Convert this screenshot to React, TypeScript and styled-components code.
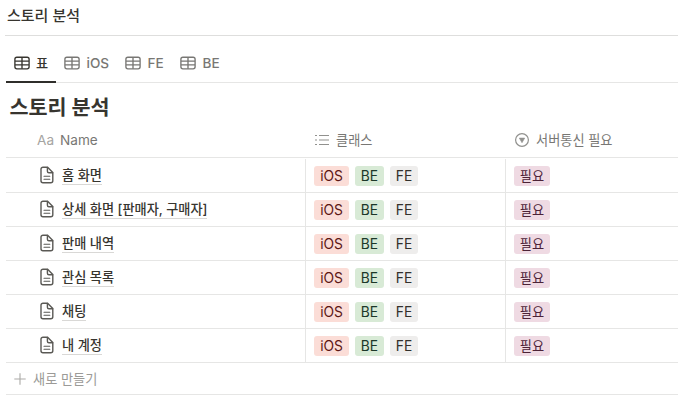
import React from 'react';
import styled, { createGlobalStyle } from 'styled-components';

const GlobalStyle = createGlobalStyle`
  * { box-sizing: border-box; }
  body {
    margin: 0;
    background: #fff;
    color: #37352f;
    font-family: Inter, "Noto Sans CJK KR", sans-serif;
    font-size: 13.2px;
  }
`;

const LINE = '#e6e6e5';

const Page = styled.div`
  width: 692px;
  height: 414px;
  padding: 0 14px 0 6px;
  overflow: hidden;
  white-space: nowrap;
`;

const PageTitle = styled.header`
  height: 36px;
  margin-left: -1px;
  padding-left: 2px;
  border-bottom: 1px solid #dededd;
  font-size: 15px;
  font-weight: 500;
  line-height: 31px;
`;

const Tabs = styled.nav`
  display: flex;
  height: 47px;
  padding-top: 11px;
  border-bottom: 1px solid ${LINE};
`;

const Tab = styled.button<{ $active?: boolean; $width: number }>`
  display: flex;
  align-items: center;
  gap: ${(p) => (p.$active ? 6 : 6.5)}px;
  width: ${(p) => p.$width}px;
  height: 36px;
  padding: 0 0 3px 8px;
  border: 0;
  border-bottom: 2px solid ${(p) => (p.$active ? '#2f2e2b' : 'transparent')};
  background: none;
  color: ${(p) => (p.$active ? '#37352f' : '#787774')};
  font: inherit;
  font-size: ${(p) => (p.$active ? 13.2 : 13.6)}px;
  font-weight: 500;
`;

const Heading = styled.h1`
  height: 40px;
  margin: 0;
  padding-left: 3.5px;
  font-size: 20.7px;
  font-weight: 700;
  line-height: 49px;
`;

const Row = styled.div`
  display: grid;
  grid-template-columns: 299px 200px 173px;
  height: 34px;
  border-bottom: 1px solid ${LINE};
`;

const HeaderRow = styled(Row)`
  height: 35px;
  color: #787774;
`;

const HeaderCell = styled.div<{ $left?: number }>`
  display: flex;
  align-items: center;
  gap: 6px;
  padding: 0 0 1px ${(p) => p.$left ?? 8}px;

  svg { flex: none; color: #91918e; }
`;

const Latin = styled.span<{ $muted?: boolean }>`
  color: ${(p) => (p.$muted ? '#a5a4a1' : 'inherit')};
  font-size: 13.6px;
`;

const Body = styled.div`
  padding-top: 1px;
`;

const NameCell = styled.div`
  display: flex;
  align-items: center;
  gap: 7px;
  padding-left: 33px;

  svg {
    flex: none;
    margin-bottom: 1px;
  }
`;

const PageLink = styled.span`
  height: 18px;
  border-bottom: 1px solid #d9d8d6;
  font-weight: 500;
  line-height: 16px;
`;

const TagCell = styled.div`
  display: flex;
  align-items: center;
  gap: 6px;
  padding: 1px 0 0 8px;
  border-left: 1px solid ${LINE};
`;

const tones = {
  red: ['#fbddd7', '#5d1715'],
  green: ['#d8ead6', '#1c3829'],
  gray: ['#eeedec', '#32302c'],
  pink: ['#efdae3', '#4c2337'],
};

const Tag = styled.span<{ $tone: keyof typeof tones; $width: number }>`
  width: ${(p) => p.$width}px;
  height: 20px;
  border-radius: 3px;
  background: ${(p) => tones[p.$tone][0]};
  color: ${(p) => tones[p.$tone][1]};
  font-size: ${(p) => (p.$tone === 'pink' ? 13.2 : 13.8)}px;
  line-height: 20px;
  text-align: center;
`;

const NewRow = styled.div`
  display: flex;
  align-items: center;
  gap: 7px;
  height: 32px;
  padding-left: 8px;
  border-bottom: 1px solid ${LINE};
  color: #9b9a97;
`;

const TableIcon = () => (
  <svg width="16" height="14" viewBox="0 0 16 14" fill="none" stroke="currentColor" strokeWidth="1.35">
    <rect x="0.9" y="1.2" width="14.2" height="11.6" rx="2" />
    <path d="M1 5.1h14M1 8.9h14M8 1.2v11.6" />
  </svg>
);

const PageIcon = () => (
  <svg width="16" height="18" viewBox="0 0 16 18" fill="none" stroke="#5a5955" strokeWidth="1.4" strokeLinejoin="round" strokeLinecap="round">
    <path d="M4 1.2h4.6l5.2 5.3v8.3a2 2 0 0 1-2 2H4a2 2 0 0 1-2-2V3.2a2 2 0 0 1 2-2Z" />
    <path d="M8.4 1.5v3.7a1.5 1.5 0 0 0 1.5 1.5h3.7" />
    <path d="M5 10.3h5.8M5 13.2h5.8" strokeWidth="1.1" />
  </svg>
);

const ListIcon = () => (
  <svg width="16" height="12" viewBox="0 0 16 12" fill="none" stroke="currentColor" strokeWidth="1.2">
    <path d="M1 1.5h2M1 6h2M1 10.5h2M5 1.5h10M5 6h10M5 10.5h10" />
  </svg>
);

const SelectIcon = () => (
  <svg width="16" height="16" viewBox="0 0 16 16" fill="none">
    <circle cx="8" cy="8" r="6.4" stroke="currentColor" strokeWidth="1.2" />
    <path d="M5.3 6.1h5.4L8 10.7Z" fill="currentColor" stroke="currentColor" strokeWidth="0.6" strokeLinejoin="round" />
  </svg>
);

const PlusIcon = () => (
  <svg width="12" height="12" viewBox="0 0 12 12" stroke="#abaaa7" strokeWidth="1.1">
    <path d="M6 0.3v11.4M0.3 6h11.4" />
  </svg>
);

const tabs = [
  { label: '표', width: 50 },
  { label: 'iOS', width: 61 },
  { label: 'FE', width: 55 },
  { label: 'BE', width: 55 },
];

const names = ['홈 화면', '상세 화면 [판매자, 구매자]', '판매 내역', '관심 목록', '채팅', '내 계정'];

export default function App() {
  return (
    <Page>
      <GlobalStyle />
      <PageTitle>스토리 분석</PageTitle>
      <Tabs>
        {tabs.map((tab, i) => (
          <Tab key={tab.label} $active={i === 0} $width={tab.width}>
            <TableIcon />
            {tab.label}
          </Tab>
        ))}
      </Tabs>
      <Heading>스토리 분석</Heading>
      <HeaderRow>
        <HeaderCell $left={31}>
          <Latin $muted>Aa</Latin>
          <Latin>Name</Latin>
        </HeaderCell>
        <HeaderCell $left={9}>
          <ListIcon />
          클래스
        </HeaderCell>
        <HeaderCell $left={9}>
          <SelectIcon />
          서버통신 필요
        </HeaderCell>
      </HeaderRow>
      <Body>
        {names.map((name) => (
          <Row key={name}>
            <NameCell>
              <PageIcon />
              <PageLink>{name}</PageLink>
            </NameCell>
            <TagCell>
              <Tag $tone="red" $width={35}>iOS</Tag>
              <Tag $tone="green" $width={29}>BE</Tag>
              <Tag $tone="gray" $width={28}>FE</Tag>
            </TagCell>
            <TagCell>
              <Tag $tone="pink" $width={36}>필요</Tag>
            </TagCell>
          </Row>
        ))}
      </Body>
      <NewRow>
        <PlusIcon />
        새로 만들기
      </NewRow>
    </Page>
  );
}
